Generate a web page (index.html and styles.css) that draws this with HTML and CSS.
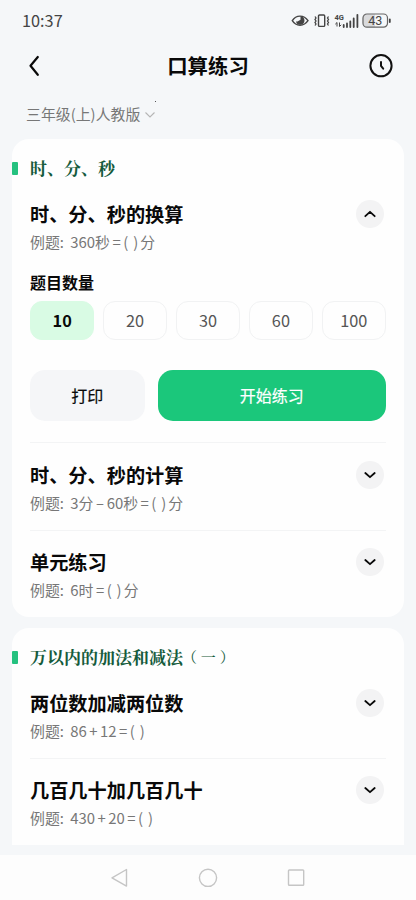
FILE: index.html
```html
<!DOCTYPE html>
<html lang="zh-CN">
<head>
<meta charset="utf-8">
<title>口算练习</title>
<link rel="stylesheet" href="styles.css">
</head>
<body>
<svg class="defs" aria-hidden="true">
  <symbol id="down" viewBox="0 0 28 28"><path d="M9.3 12l4.7 4.2 4.7-4.2"/></symbol>
  <symbol id="up" viewBox="0 0 28 28"><path d="M9.3 16.2l4.7-4.4 4.7 4.4"/></symbol>
</svg>
<div class="screen">
  <div class="status">
    <span class="time">10:37</span>
    <svg class="indicators" width="102" height="18" viewBox="0 0 102 18">
      <path class="line" d="M1.300 8.700C5 2.600 13 2.600 17 8.700C13 14.700 5 14.700 1.300 8.700Z"/>
      <path class="solid" d="M9.500 4.200v3.600L6.500 9.500H5a4.300 4.300 0 1 0 4.500-5.300Z"/>
      <rect class="line" x="27.500" y="3" width="6.200" height="11.400" rx="1"/>
      <path class="wave" d="M24 4.500l1 1.500-1 1.500 1 1.500-1 1.500 1 1.500-1 1.500M37.500 4.500l-1 1.500 1 1.500-1 1.500 1 1.500-1 1.500 1 1.500"/>
      <text class="net" x="43.500" y="8.300">4G</text>
      <path class="thin" d="M46 14.500V10.500M44.300 12.200L46 10.500M48.500 10.500v4M48.500 14.500l1.700-1.700"/>
      <path class="bars" d="M52.700 13v2M56 11.500v3.500M59.300 9.500v5.500M62.700 6.500v8.500M66.400 2.800v12.200"/>
      <path class="charge" d="M84 2.200H76a4.500 4.500 0 0 0-4.500 4.500V10.700a4.500 4.500 0 0 0 4.500 4.500H84Z"/>
      <rect class="shell" x="72" y="2" width="24.500" height="13.200" rx="4"/>
      <path class="bars" d="M98.800 7.500v2.500"/>
      <text class="level" x="84.200" y="12.900">43</text>
    </svg>
  </div>
  <header class="titlebar">
    <svg width="24" height="28" viewBox="0 0 24 28"><path class="back" d="M14.800 5L7.500 13.800l7.300 9"/></svg>
    <h1>口算练习</h1>
    <svg width="24" height="28" viewBox="0 0 24 28"><circle class="clock" cx="12" cy="13.700" r="10.600"/><path class="clock" d="M12 9.900v4l2.200 2.700"/></svg>
  </header>
  <div class="grade"><span>三年级(上)人教版</span><svg width="12" height="8" viewBox="0 0 12 8"><path d="M1.500 1.500L6 6l4.500-4.500"/></svg><i class="speck"></i></div>

  <main>
    <section class="card">
      <h2>时、分、秒</h2>
      <article class="item open">
        <div class="row"><h3>时、分、秒的换算</h3><svg class="toggle"><use href="#up"/></svg></div>
        <p>例题<b>:</b>360秒<b class="op">=</b><b class="blank">( )</b>分</p>
        <h4>题目数量</h4>
        <div class="chips"><span class="chip on">10</span><span class="chip">20</span><span class="chip">30</span><span class="chip">60</span><span class="chip">100</span></div>
        <div class="actions"><button class="print">打印</button><button class="start">开始练习</button></div>
      </article>
      <article class="item">
        <div class="row"><h3>时、分、秒的计算</h3><svg class="toggle"><use href="#down"/></svg></div>
        <p>例题<b>:</b>3分<b class="op">–</b>60秒<b class="op">=</b><b class="blank">( )</b>分</p>
      </article>
      <article class="item">
        <div class="row"><h3>单元练习</h3><svg class="toggle"><use href="#down"/></svg></div>
        <p>例题<b>:</b>6时<b class="op">=</b><b class="blank">( )</b>分</p>
      </article>
    </section>
    <section class="card cut">
      <h2>万以内的加法和减法<span class="paren">（ 一 ）</span></h2>
      <article class="item">
        <div class="row"><h3>两位数加减两位数</h3><svg class="toggle"><use href="#down"/></svg></div>
        <p>例题<b>:</b>86<b class="op">+</b>12<b class="op">=</b><b class="blank">( )</b></p>
      </article>
      <article class="item">
        <div class="row"><h3>几百几十加几百几十</h3><svg class="toggle"><use href="#down"/></svg></div>
        <p>例题<b>:</b>430<b class="op">+</b>20<b class="op">=</b><b class="blank">( )</b></p>
      </article>
    </section>
  </main>
  <nav>
    <svg width="20" height="20" viewBox="0 0 20 20"><path d="M16.500 1.500v16.600L2 9.800Z"/></svg>
    <svg width="20" height="20" viewBox="0 0 20 20"><circle cx="10" cy="9.800" r="8.600"/></svg>
    <svg width="20" height="20" viewBox="0 0 20 20"><rect x="1.500" y="2" width="15.200" height="15.200" rx=".8"/></svg>
  </nav>
</div>
</body>
</html>
```
FILE: styles.css
```css
* { box-sizing: border-box; margin: 0; padding: 0; }
body { background: #f5f7f9; font-family: "Noto Sans CJK SC", sans-serif; color: #090909; }
svg { display: block; fill: none; flex: none; }
.defs { width: 0; height: 0; position: absolute; }
.screen { height: 900px; display: flex; flex-direction: column; overflow: hidden; }

.status { height: 42px; padding: 0 23px 0 22px; display: flex; align-items: center; justify-content: space-between; color: #444; }
.time { font-size: 16.300px; line-height: 20px; padding-bottom: 2px; }
.indicators .line { stroke: #444; stroke-width: 1.400; }
.indicators .thin { stroke: #444; stroke-width: 1; }
.indicators .wave { stroke: #444; stroke-width: 1.300; }
.indicators .bars { stroke: #444; stroke-width: 1.800; stroke-linecap: round; }
.indicators .solid { fill: #444; }
.indicators .charge { fill: #d9dadc; }
.indicators .shell { stroke: #666; stroke-width: 1.200; }
.net { font: bold 7.500px Roboto, sans-serif; fill: #444; }
.level { font: 400 12.500px Roboto, sans-serif; fill: #444; text-anchor: middle; }

.titlebar { height: 48px; padding: 0 23px; display: flex; align-items: center; justify-content: space-between; }
h1 { font-size: 20.400px; line-height: 28px; font-weight: 700; padding-bottom: 2px; }
.back { stroke: #090909; stroke-width: 2.200; stroke-linecap: round; stroke-linejoin: round; }
.clock { stroke: #111; stroke-width: 2; stroke-linecap: round; stroke-linejoin: round; }
.grade { position: relative; height: 49px; padding: 0 26px; display: flex; align-items: center; gap: 4px; font-size: 14.900px; color: #777; }
.grade span { padding-bottom: 2px; }
.grade svg { stroke: #b5b5b5; stroke-width: 1.100; }
.speck { position: absolute; left: 155px; top: 11px; width: 1px; height: 1px; background: #555; }

main { flex: none; height: 706px; padding: 0 12.500px 0 12px; display: flex; flex-direction: column; gap: 11px; }
.card { background: #fefefe; border-radius: 17px; padding: 0 17.500px 0 18px; height: 478px; }
.card.cut { height: 217px; border-radius: 17px 17px 0 0; }
h2 { height: 42px; padding-top: 16px; margin-left: -18px; display: flex; align-items: flex-start; font-family: "Noto Serif CJK SC", "Noto Sans CJK SC", serif; font-size: 17px; line-height: 26px; font-weight: 700; color: #155b3c; white-space: nowrap; }
h2::before { content: ""; width: 6px; height: 13px; margin: 7px 12px 0 0; background: #25c17f; border-radius: 1px; }
.paren { font-weight: 400; font-size: 15px; margin-left: -1px; }
.item { height: 87.500px; padding-top: 19px; }
.item + .item { border-top: 1px solid #f3f4f5; padding-top: 17.500px; }
.item.open { height: 261px; }
.row { height: 28px; display: flex; align-items: center; justify-content: space-between; }
h3 { font-size: 19.200px; line-height: 28px; font-weight: 700; white-space: nowrap; }
.toggle { width: 28px; height: 28px; margin-right: 2px; border-radius: 50%; background: #f3f3f4; stroke: #090909; stroke-width: 1.800; stroke-linecap: round; stroke-linejoin: round; }
p { height: 22px; margin-top: 3px; font-size: 14.900px; line-height: 22px; color: #777; white-space: pre; }
p b { font-weight: 400; display: inline-block; width: 10.500px; }
p .op { width: 13.200px; text-align: center; }
p .blank { width: 17px; letter-spacing: .8px; }
h4 { margin-top: 17px; font-size: 16px; line-height: 24px; font-weight: 700; }
.chips { margin: 7px 0 0; display: grid; grid-template-columns: repeat(5, 1fr); gap: 8.500px; }
.chip { height: 39px; border: 1px solid #f1f2f3; border-radius: 12px; display: flex; align-items: center; justify-content: center; font-size: 16.300px; line-height: 24px; padding-bottom: 1px; color: #555; }
.chip.on { background: #d9fbe4; border-color: #d9fbe4; color: #090909; font-weight: 700; }
.actions { margin-top: 30px; display: flex; gap: 13px; }
button { height: 51px; padding-bottom: 2px; border: 0; border-radius: 15px; font-family: inherit; font-size: 16px; font-weight: 400; -webkit-text-stroke: .2px currentColor; }
.print { width: 114.500px; background: #f5f6f8; color: #090909; }
.start { flex: 1; background: #1bc77b; color: #fff; }

nav { flex: none; margin-top: 10px; height: 45px; background: #fdfdfd; display: flex; justify-content: center; gap: 68.500px; padding-top: 12.500px; }
nav svg { stroke: #c5c5c5; stroke-width: 1.400; stroke-linejoin: round; }
```
